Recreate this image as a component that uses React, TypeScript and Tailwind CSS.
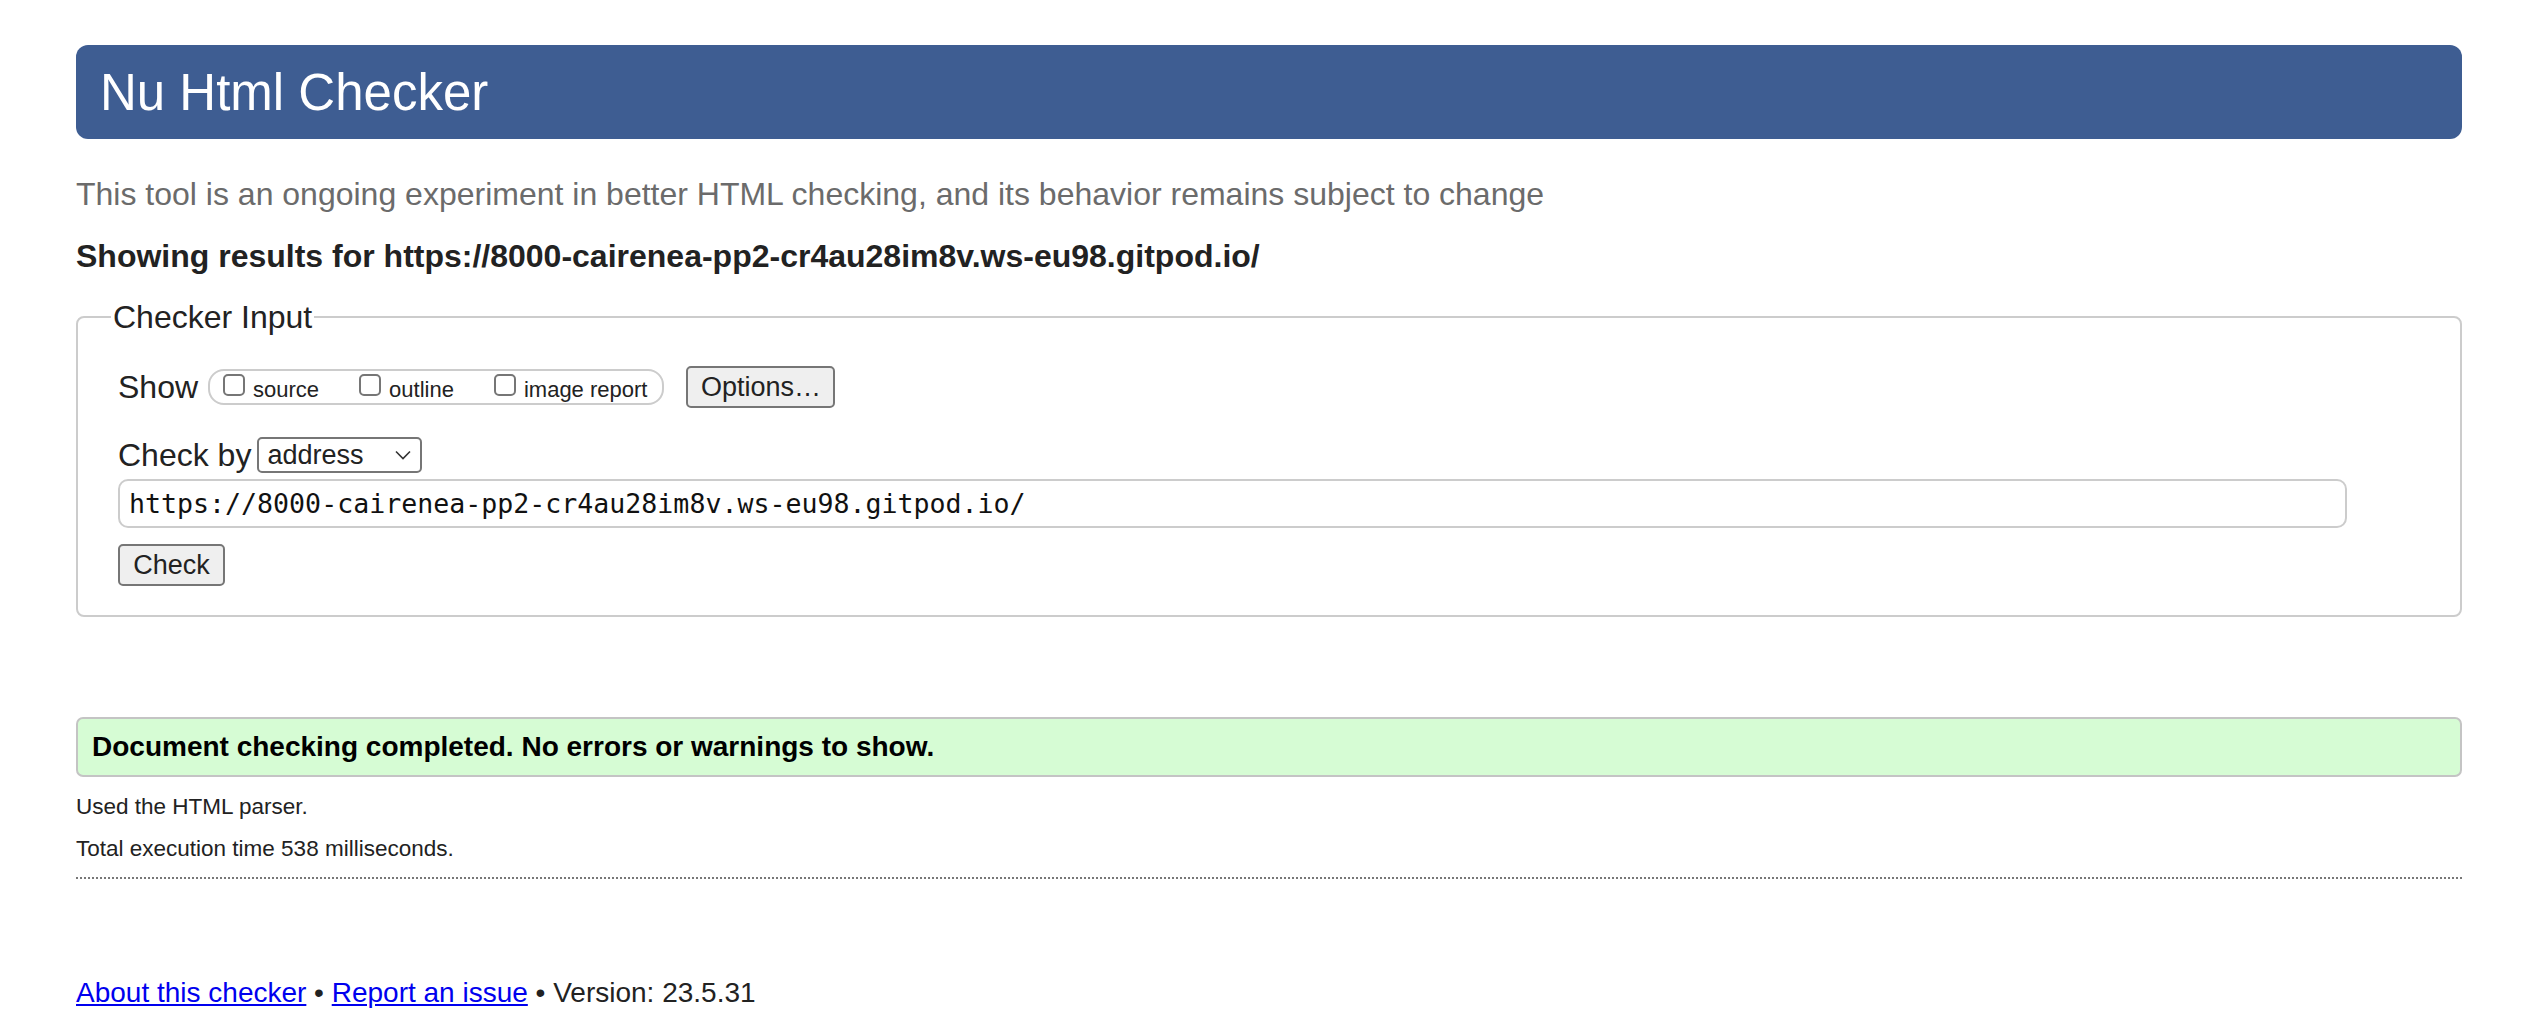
import React from 'react';

const sans = { fontFamily: '"Liberation Sans", Arial, sans-serif' };
const mono = { fontFamily: '"DejaVu Sans Mono", "Liberation Mono", monospace' };

function Box({ label }: { label: string }) {
  return (
    <label className="flex items-center">
      <span className="mb-[5px] h-[22px] w-[22px] rounded-[5px] border-2 border-[#767676] bg-white" />
      <span className="ml-[8px] mt-[6px] text-[22px] leading-[26px]">{label}</span>
    </label>
  );
}

export default function App() {
  const url = 'https://8000-cairenea-pp2-cr4au28im8v.ws-eu98.gitpod.io/';

  return (
    <div className="min-h-screen bg-white px-[76px] text-[#222]" style={sans}>
      {/* Title bar */}
      <h1 className="mt-[45px] flex h-[94px] items-center rounded-[12px] bg-[#3e5d92] pl-[24px] text-[51px] font-normal leading-none text-white">
        Nu Html Checker
      </h1>

      <p className="mt-[36px] text-[32px] leading-[38px] text-[#6b6b6b]">
        This tool is an ongoing experiment in better HTML checking, and its behavior remains subject to change
      </p>
      <p className="mt-[24px] text-[32px] font-bold leading-[38px]">Showing results for {url}</p>

      {/* Checker input */}
      <fieldset className="mt-[23px] rounded-[8px] border-2 border-[#ccc] px-[40px] pb-[29px]">
        <legend className="-ml-[7px] px-[2px] text-[32px] leading-[38px]">Checker Input</legend>

        <div className="mt-[30px] flex items-center">
          <span className="text-[32px] leading-[38px]">Show</span>
          <div className="ml-[10px] flex h-[36px] items-center gap-[40px] rounded-[16px] border-2 border-[#ccc] pl-[13px] pr-[15px]">
            <Box label="source" />
            <Box label="outline" />
            <Box label="image report" />
          </div>
          <button className="ml-[22px] flex h-[42px] w-[149px] items-center justify-center rounded-[5px] border-2 border-[#767676] bg-[#efefef] text-[27px]">
            Options…
          </button>
        </div>

        <div className="mt-[28px] flex items-center">
          <span className="text-[32px] leading-[38px]">Check by</span>
          <div className="ml-[6px] flex h-[36px] w-[165px] items-center justify-between rounded-[5px] border-2 border-[#767676] bg-white pl-[8px] pr-[9px]">
            <span className="text-[27px] leading-none">address</span>
            <svg width="16" height="10" viewBox="0 0 16 10" fill="none" stroke="#333" strokeWidth="1.6">
              <path d="M1 1.5 L8 8.5 L15 1.5" />
            </svg>
          </div>
        </div>

        <div className="mt-[5px] flex h-[49px] w-[2229px] items-center rounded-[10px] border-2 border-[#ccc] pl-[9px] text-[26.6px] text-[#111]" style={mono}>
          {url}
        </div>

        <button className="mt-[16px] flex h-[42px] w-[107px] items-center justify-center rounded-[5px] border-2 border-[#767676] bg-[#efefef] text-[27px]">
          Check
        </button>
      </fieldset>

      {/* Result */}
      <div className="mt-[100px] flex h-[60px] items-center rounded-[7px] border-2 border-[#c4c4c4] bg-[#d6fcd4] pl-[14px]">
        <span className="text-[28px] font-bold text-black">Document checking completed. No errors or warnings to show.</span>
      </div>

      <div className="border-b-2 border-dotted border-[#777] pb-[13px]">
        <p className="mt-[15px] text-[22.5px] leading-[30px]">Used the HTML parser.</p>
        <p className="mt-[12px] text-[22.5px] leading-[30px]">Total execution time 538 milliseconds.</p>
      </div>

      <p className="mt-[97px] text-[28px] leading-[34px]">
        <a href="#" className="text-[#0000ee] underline">About this checker</a>
        {' • '}
        <a href="#" className="text-[#0000ee] underline">Report an issue</a>
        {' • Version: 23.5.31'}
      </p>
    </div>
  );
}
